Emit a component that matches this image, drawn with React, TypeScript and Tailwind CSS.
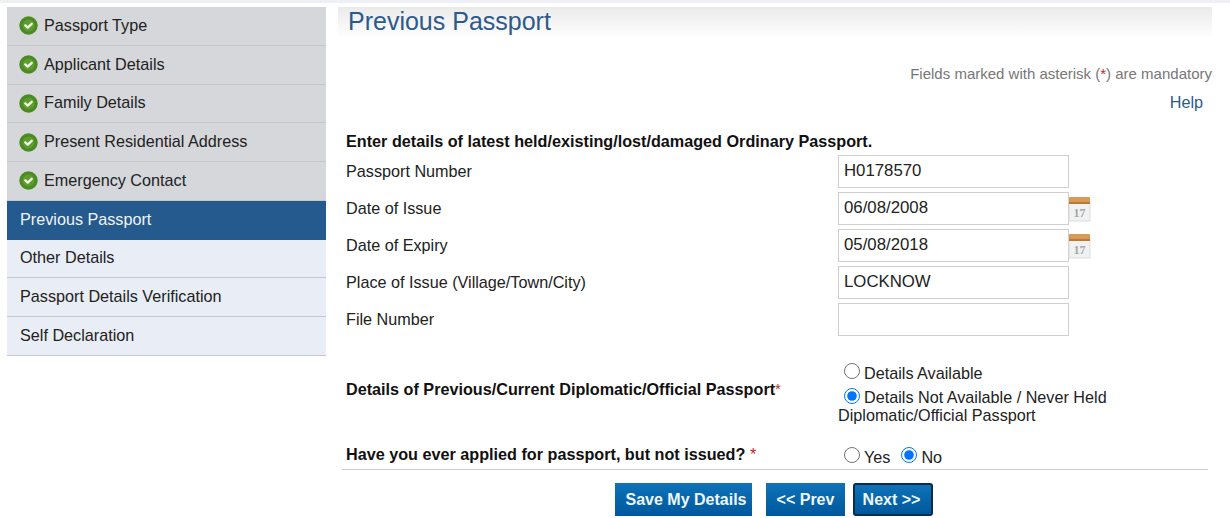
const done = ["Passport Type", "Applicant Details", "Family Details", "Present Residential Address", "Emergency Contact"];
const todo = ["Other Details", "Passport Details Verification", "Self Declaration"];

function Check() {
  return (
    <svg width="19" height="19" viewBox="0 0 19 19" className="shrink-0">
      <circle cx="9.5" cy="9.5" r="9.2" fill="#4c8a22" />
      <circle cx="9.5" cy="9.5" r="6" fill="#5d9c2e" />
      <path d="M6.3 9.4 L8.7 11.6 L12.7 7.8" fill="none" stroke="#f3f7ea" strokeWidth="2.4" strokeLinecap="round" strokeLinejoin="round" />
    </svg>
  );
}

function Calendar() {
  return (
    <svg width="23" height="26" viewBox="0 0 23 26" className="shrink-0 -ml-px">
      <rect x="1" y="6" width="21" height="19" fill="#f1f1f1" stroke="#dcdcdc" />
      <rect x="1" y="1" width="21" height="7" rx="1" fill="#d99a55" />
      <rect x="1" y="6" width="21" height="2" fill="#b97a38" />
      <text x="11.5" y="21" textAnchor="middle" fontFamily="Liberation Serif, serif" fontSize="12" fontWeight="700" fill="#a4a8ac">17</text>
    </svg>
  );
}

function Field({ label, value, cal }: { label: string; value: string; cal?: boolean }) {
  return (
    <div className="flex h-[33px] items-center">
      <div className="w-[496px] pb-[2px] pl-[4px]">{label}</div>
      <input
        readOnly
        value={value}
        className="h-[33px] w-[231px] border border-[#cfcfcf] bg-white px-[5px] pb-[2px] text-[16.8px] text-[#222] outline-none"
      />
      {cal && <Calendar />}
    </div>
  );
}

function Btn({ children, w, extra }: { children: string; w: string; extra?: string }) {
  return (
    <button
      className={`${w} ${extra ?? ""} h-[33px] bg-gradient-to-b from-[#0f72b8] to-[#00589c] text-[16px] font-bold text-[#eef6fc]`}
    >
      {children}
    </button>
  );
}

export default function App() {
  return (
    <div className="h-[518px] w-[1230px] overflow-hidden bg-white font-['Liberation_Sans',Arial,sans-serif] text-[16.2px] leading-[20px] text-[#222]">
      <div className="h-[3px] bg-[#eef0f6]" />
      <div className="flex items-start gap-[12px] pl-[7px] pt-[4px]">
        <nav className="w-[319px] shrink-0">
          {done.map((t) => (
            <div key={t} className="flex h-[38.75px] items-center gap-[6px] border-b border-[#c4c6ca] bg-[#d5d7db] pl-[12px]">
              <Check />
              <span className="pb-[2px]">{t}</span>
            </div>
          ))}
          <div className="flex h-[38.75px] items-center bg-[#255a8e] pb-[2px] pl-[13px] text-[#f0f4f8]">Previous Passport</div>
          {todo.map((t) => (
            <div key={t} className="flex h-[38.75px] items-center border-b border-[#c6c8cc] bg-[#e9edf5] pb-[2px] pl-[13px]">{t}</div>
          ))}
        </nav>
        <main className="min-w-0 flex-1">
          <div className="mr-[18px] h-[31px] bg-gradient-to-b from-[#eaeaea] to-white pl-[10px] text-[25px] leading-[29px] text-[#2c5a8c]">
            Previous Passport
          </div>
          <div className="mr-[18px] mt-[26px] text-right text-[15px] text-[#777]">
            Fields marked with asterisk (<span className="text-[#c0272d]">*</span>) are mandatory
          </div>
          <div className="mr-[27px] mt-[8px] text-right text-[#2c5a8c]">Help</div>
          <div className="pl-[4px]">
            <div className="mt-[19px] pl-[4px] font-bold text-[#111]">
              Enter details of latest held/existing/lost/damaged Ordinary Passport.
            </div>
            <div className="mt-[4px] flex flex-col gap-[4px]">
              <Field label="Passport Number" value="H0178570" />
              <Field label="Date of Issue" value="06/08/2008" cal />
              <Field label="Date of Expiry" value="05/08/2018" cal />
              <Field label="Place of Issue (Village/Town/City)" value="LOCKNOW" />
              <Field label="File Number" value="" />
            </div>
            <div className="mt-[24px] flex items-center">
              <div className="w-[496px] pb-[7px] pl-[4px] font-bold text-[#111]">
                Details of Previous/Current Diplomatic/Official Passport<span className="align-top text-[15px] font-normal text-[#c0272d]">*</span>
              </div>
              <div className="w-[290px]">
                <label className="flex h-[25px] items-center pl-[6px]">
                  <input type="radio" name="dip" className="m-0 mb-[4px] mr-[4px] h-[16px] w-[16px]" />
                  <span className="pt-[1px]">Details Available</span>
                </label>
                <label className="flex h-[23px] items-center pl-[6px]">
                  <input type="radio" name="dip" defaultChecked className="m-0 mb-[2px] mr-[4px] h-[16px] w-[16px]" />
                  <span>Details Not Available / Never Held</span>
                </label>
                <div className="-mt-[1px] leading-[17px]">Diplomatic/Official Passport</div>
              </div>
            </div>
            <div className="mt-[20px] flex h-[22px] items-center">
              <div className="w-[496px] pb-[2px] pl-[4px] font-bold text-[#111]">
                Have you ever applied for passport, but not issued? <span className="font-normal text-[#c0272d]">*</span>
              </div>
              <label className="flex items-center pl-[6px]">
                <input type="radio" name="ap" className="m-0 mr-[4px] h-[16px] w-[16px]" />
                <span className="pt-[4px]">Yes</span>
              </label>
              <label className="flex items-center pl-[11px]">
                <input type="radio" name="ap" defaultChecked className="m-0 mr-[4px] h-[16px] w-[16px]" />
                <span className="pt-[4px]">No</span>
              </label>
            </div>
            <div className="mr-[22px] mt-[3px] border-t border-[#cfcfcf]" />
            <div className="mt-[13px] flex pl-[273px]">
              <Btn w="w-[137px]" extra="pl-[5px]">Save My Details</Btn>
              <div className="w-[14px]" />
              <Btn w="w-[79px]">{"<< Prev"}</Btn>
              <div className="w-[8px]" />
              <Btn w="w-[80px]" extra="rounded-[3px] border-2 border-[#0c2c48] pr-[3px]">{"Next >>"}</Btn>
            </div>
          </div>
        </main>
      </div>
    </div>
  );
}
